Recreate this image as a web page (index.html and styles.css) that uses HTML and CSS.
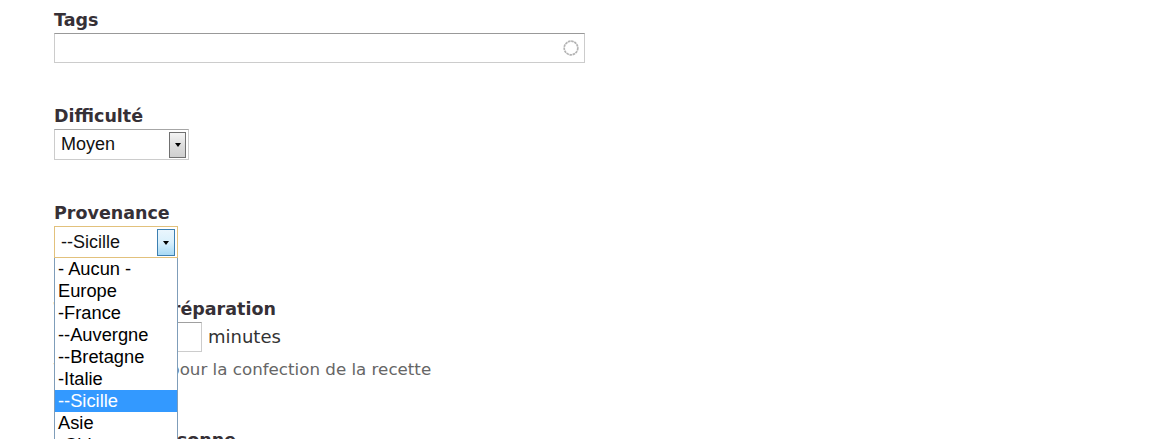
FILE: index.html
```html
<!DOCTYPE html>
<html lang="fr">
<head>
<meta charset="utf-8">
<title>Recette</title>
<link rel="stylesheet" href="styles.css">
</head>
<body>
<form class="form">
  <div class="form-item">
    <label class="label" for="tags">Tags</label>
    <div class="autocomplete">
      <input class="form-text" id="tags" type="text">
      <svg class="throbber" width="18" height="18" viewBox="0 0 18 18" aria-hidden="true">
        <circle cx="9" cy="9" r="6.8" fill="none" stroke="#b4b4b4" stroke-width="1.7" stroke-dasharray="2.6 0.6"/>
      </svg>
    </div>
  </div>

  <div class="form-item">
    <label class="label">Difficulté</label>
    <div class="select select-difficulty" role="combobox">
      <span class="select-value">Moyen</span>
      <span class="select-btn"><span class="arrow"></span></span>
    </div>
  </div>

  <div class="form-item form-item-open">
    <label class="label">Provenance</label>
    <div class="select-wrap">
      <div class="select select-origin" role="combobox" aria-expanded="true">
        <span class="select-value">--Sicille</span>
        <span class="select-btn select-btn-active"><span class="arrow"></span></span>
      </div>
      <ul class="dropdown" role="listbox">
        <li class="option">- Aucun -</li>
        <li class="option">Europe</li>
        <li class="option">-France</li>
        <li class="option">--Auvergne</li>
        <li class="option">--Bretagne</li>
        <li class="option">-Italie</li>
        <li class="option option-selected">--Sicille</li>
        <li class="option">Asie</li>
        <li class="option">-Chine</li>
        <li class="option">-Japon</li>
      </ul>
    </div>
  </div>

  <div class="form-item">
    <label class="label">Temps de préparation</label>
    <div class="inline-row">
      <input class="form-text small-text" type="text">
      <span class="suffix">minutes</span>
    </div>
    <div class="description">Temps requis pour la confection de la recette</div>
  </div>

  <div class="form-item">
    <label class="label">Prix par personne</label>
    <div class="inline-row">
      <input class="form-text small-text" type="text">
    </div>
  </div>
</form>
</body>
</html>
```

FILE: styles.css
```css
html, body {
  margin: 0;
  padding: 0;
  background: #ffffff;
}

.form {
  padding: 9px 0 0 54px;
  font-family: "DejaVu Sans", sans-serif;
  color: #333333;
}

.form-item {
  margin-bottom: 42px;
}

.form-item-open {
  margin-bottom: 40px;
}

.label {
  display: block;
  font-weight: bold;
  font-size: 17.5px;
  line-height: 22px;
  color: #363036;
  margin-bottom: 2px;
  word-spacing: 3px;
}

.autocomplete {
  display: flex;
  align-items: center;
  width: 531px;
  height: 30px;
  box-sizing: border-box;
  border: 1px solid #cccccc;
  border-top-color: #999999;
  padding-right: 4px;
  background: #fff;
}

.autocomplete .form-text {
  flex: 1;
  border: none;
  height: 100%;
  outline: none;
  padding: 0 4px;
  background: transparent;
}

.throbber {
  display: block;
}

.select {
  display: flex;
  align-items: center;
  box-sizing: border-box;
  border: 1px solid #cccccc;
  border-top-color: #a6a6a6;
  padding-left: 6px;
  font-family: "Liberation Sans", Arial, sans-serif;
  font-size: 18px;
  color: #111;
  background: #fff;
}

.select-difficulty {
  width: 135px;
  height: 31px;
}

.select-origin {
  width: 124px;
  height: 32px;
  border: 1px solid #e2c17c;
}

.select-value {
  flex: 1;
}

.select-btn {
  display: flex;
  align-items: center;
  justify-content: center;
  width: 17px;
  height: 26px;
  box-sizing: border-box;
  margin-right: 2px;
  border: 1px solid #707070;
  background: linear-gradient(#f4f4f4, #dcdcdc 55%, #cfcfcf);
}

.select-btn-active {
  width: 18px;
  height: 27px;
  border-color: #3c7fb1;
  background: linear-gradient(#eaf6fd, #d9f0fc 50%, #a7d9f5);
}

.arrow {
  width: 0;
  height: 0;
  border-left: 3.5px solid transparent;
  border-right: 3.5px solid transparent;
  border-top: 4px solid #000;
  margin-top: 1px;
}

.select-wrap {
  position: relative;
  width: 124px;
}

.dropdown {
  position: absolute;
  top: 100%;
  left: 0;
  z-index: 10;
  width: 124px;
  box-sizing: border-box;
  margin: 0;
  padding: 0;
  list-style: none;
  background: #fff;
  border: 1px solid #7f9db9;
  border-top: none;
  font-family: "Liberation Sans", Arial, sans-serif;
  font-size: 18.3px;
  line-height: 22px;
  color: #000;
}

.option {
  padding-left: 3px;
  height: 22px;
  white-space: nowrap;
}

.option-selected {
  background: #3399ff;
  color: #ffffff;
}

.inline-row {
  display: flex;
  align-items: center;
  gap: 6px;
}

.form-text {
  font-family: "Liberation Sans", Arial, sans-serif;
  font-size: 16px;
}

.small-text {
  width: 148px;
  height: 30px;
  box-sizing: border-box;
  border: 1px solid #cccccc;
  border-top-color: #a0a0a0;
  margin: 0;
  padding: 0 4px;
}

.suffix {
  font-size: 18px;
  color: #333;
  margin-bottom: 2px;
}

.description {
  margin-top: 7px;
  padding-bottom: 8px;
  font-size: 16.7px;
  line-height: 20px;
  color: #666666;
}
```
